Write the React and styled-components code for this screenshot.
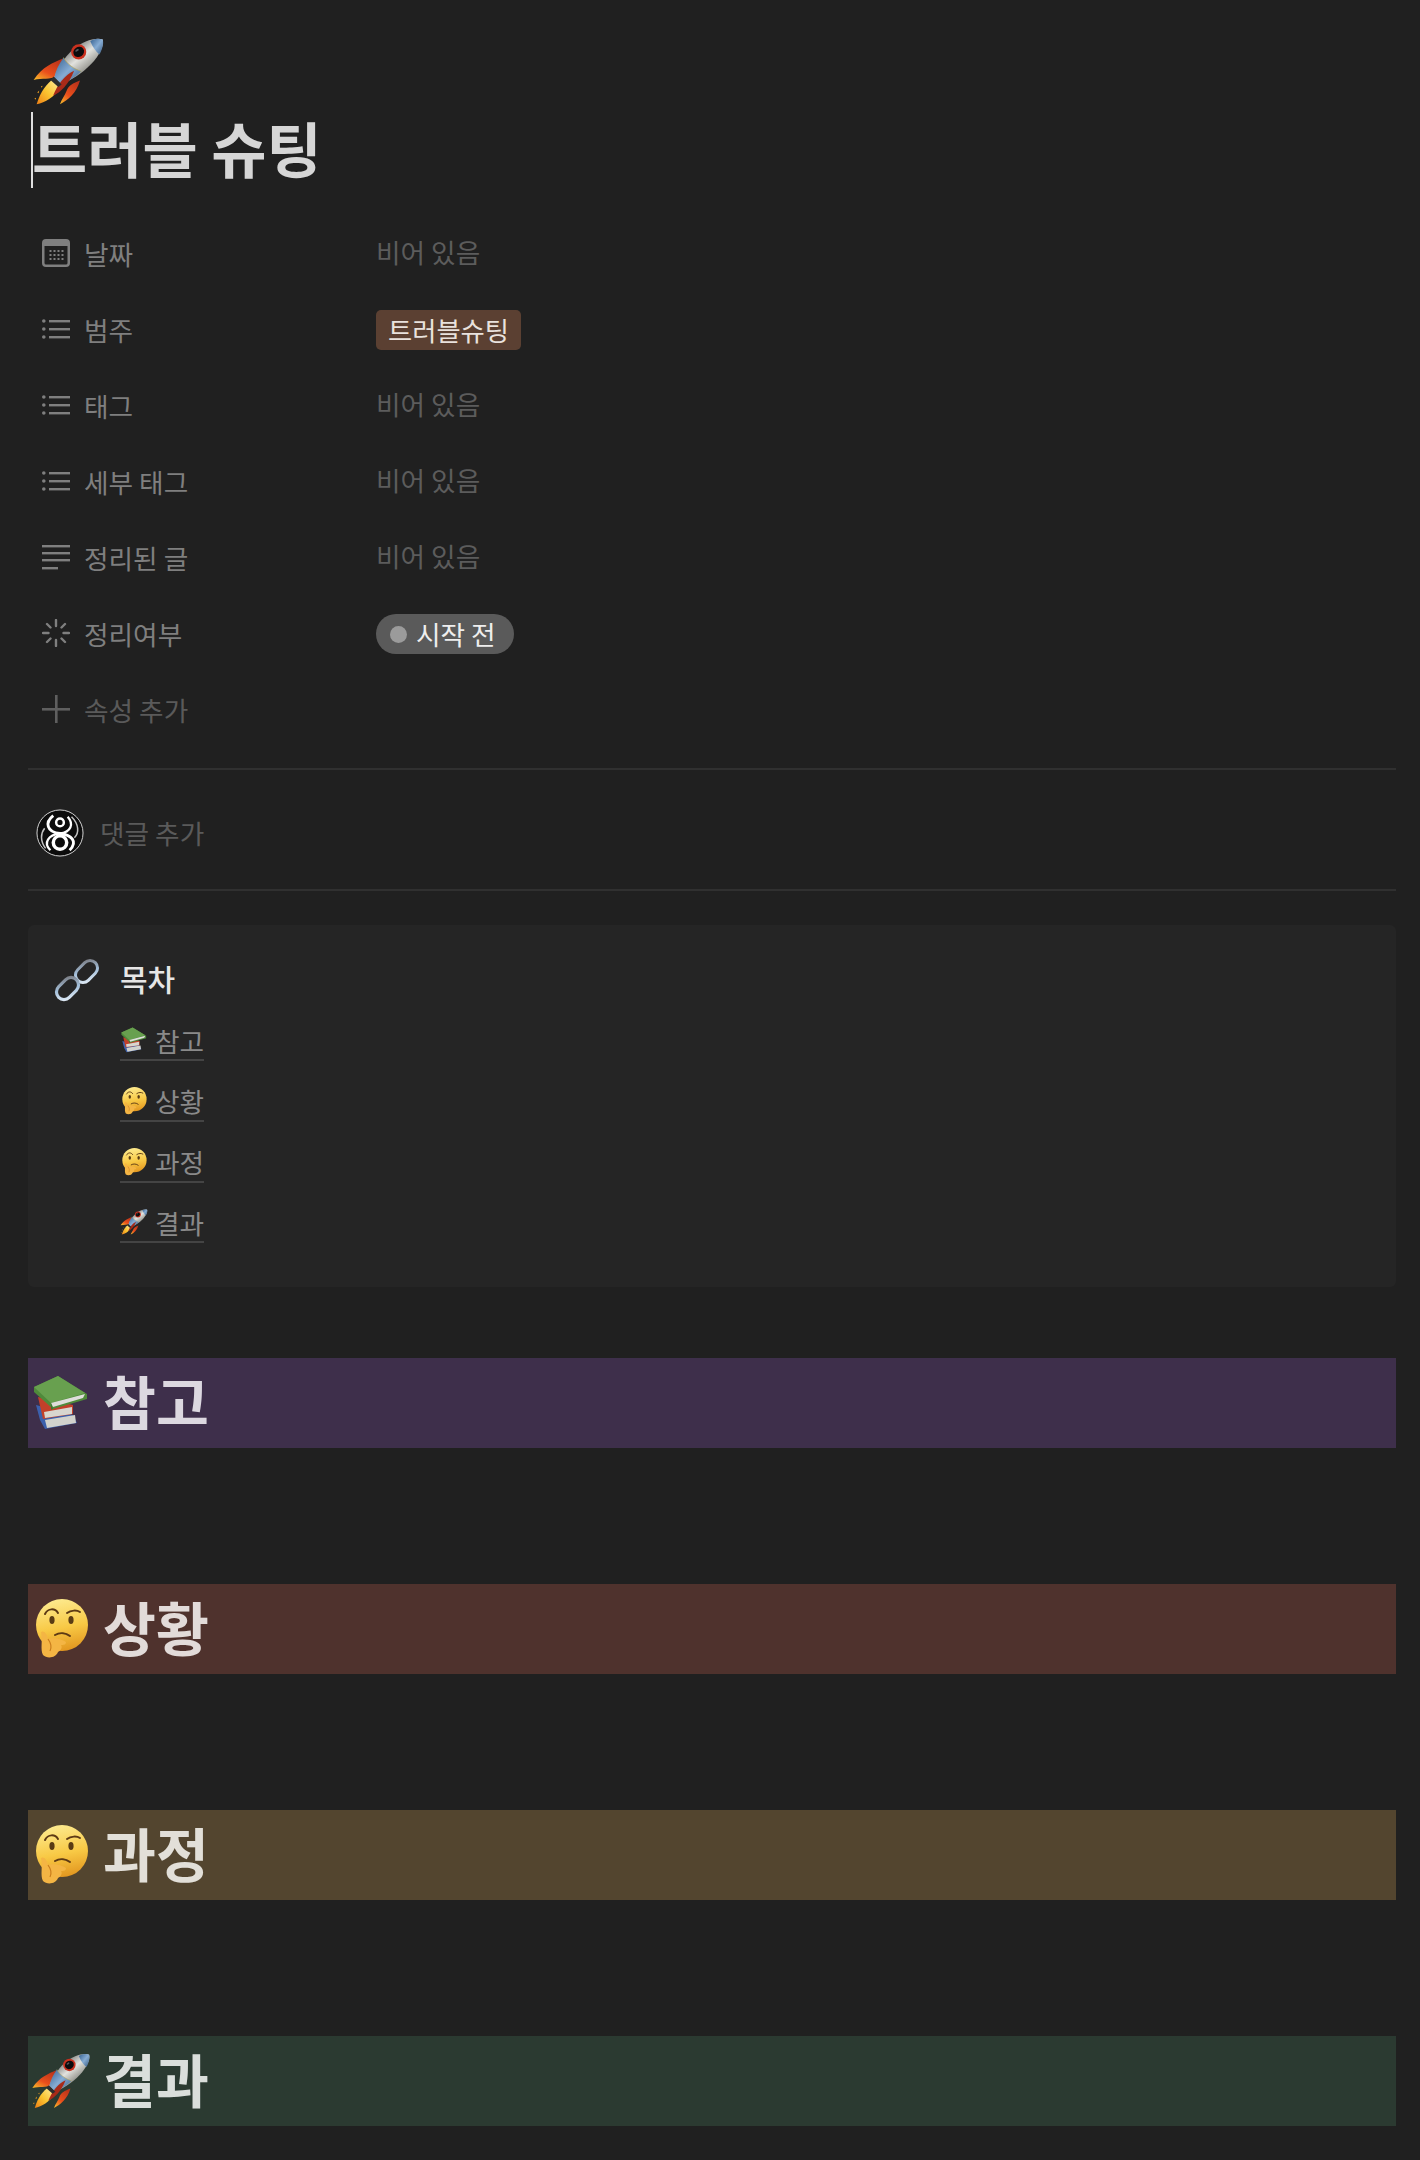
import styled, { createGlobalStyle } from 'styled-components';

const GlobalStyle = createGlobalStyle`
  html, body {
    margin: 0;
    padding: 0;
    background: #202020;
  }
  body {
    font-family: "Noto Sans CJK KR", "Noto Sans", sans-serif;
    color: #d4d4d4;
  }
`;

const Rocket = ({ size }) => (
  <svg width={size} height={size} viewBox="40 45 222 215">
    <defs>
      <linearGradient id="rkFin" x1="0.8" y1="0" x2="0.1" y2="1">
        <stop offset="0" stopColor="#b8321a" />
        <stop offset="0.6" stopColor="#ea4f1c" />
        <stop offset="1" stopColor="#f7b52a" />
      </linearGradient>
      <linearGradient id="rkFlame" x1="1" y1="0" x2="0" y2="1">
        <stop offset="0" stopColor="#fff3b0" />
        <stop offset="0.55" stopColor="#fbc531" />
        <stop offset="1" stopColor="#ee7f15" />
      </linearGradient>
      <linearGradient id="rkBody" x1="0.25" y1="0.15" x2="0.8" y2="0.8">
        <stop offset="0" stopColor="#5f605e" />
        <stop offset="0.45" stopColor="#e2e2de" />
        <stop offset="1" stopColor="#666760" />
      </linearGradient>
      <linearGradient id="rkBlue" x1="0" y1="0" x2="1" y2="1">
        <stop offset="0" stopColor="#35608f" />
        <stop offset="0.5" stopColor="#86acd4" />
        <stop offset="1" stopColor="#37597f" />
      </linearGradient>
    </defs>
    <path d="M134 113C105 125 72 138 45 178C72 172 95 178 114 168Z" fill="url(#rkFin)" />
    <path d="M186 180C165 188 150 196 145 212C140 226 130 238 125 252C150 240 175 218 186 180Z" fill="url(#rkFin)" />
    <path d="M108 172C84 190 66 212 54 252C80 246 108 232 128 198Z" fill="url(#rkFlame)" />
    <path d="M62 210l-6 6 4 3zM52 232l-5 3 5 3zM72 196l-5 2 3 4z" fill="#f0a020" />
    <path d="M255 55C232 48 195 60 165 85C136 112 116 148 108 170L130 192C152 182 192 160 220 130C246 102 260 72 255 55Z" fill="url(#rkBody)" />
    <path d="M255 55C238 50 226 54 217 60C224 78 234 92 245 101C253 85 259 68 255 55Z" fill="url(#rkBlue)" />
    <path d="M136 110C122 130 112 150 108 170L130 192C146 184 170 172 190 152C168 145 146 130 136 110Z" fill="url(#rkBlue)" />
    <path d="M136 110C146 130 168 145 190 152" fill="none" stroke="#b9a54d" strokeWidth="2" />
    <circle cx="182" cy="93" r="23" fill="#c9301e" />
    <ellipse cx="182" cy="93" rx="17" ry="15" transform="rotate(-35 182 93)" fill="#0b0b0d" />
    <ellipse cx="177" cy="88" rx="6" ry="3" transform="rotate(-35 177 88)" fill="#55565c" />
    <path d="M168 150C140 163 118 190 104 226C126 216 152 192 168 150Z" fill="#a82a18" />
    <path d="M106 168L130 192L120 200L96 178Z" fill="#2c2d2e" />
  </svg>
);

const Books = ({ size }) => (
  <svg width={size} height={size} viewBox="0 0 60 60">
    <path d="M5 32L42 42L46 50L14 56L9 47Z" fill="#3c60ac" />
    <path d="M14 47L44 42L45 50L16 55Z" fill="#d2d2cc" />
    <path d="M7 24L42 32L42 41L12 46Z" fill="#c2402a" />
    <path d="M13 39L41 34L41 41L14 45Z" fill="#d8d6cf" />
    <path d="M3 14L27 3L56 21L56 26L22 36L3 19Z" fill="#4f8a3a" />
    <path d="M3 14L27 3L54 20L20 30Z" fill="#68a04f" />
    <path d="M20 30L54 21L52 25L22 34Z" fill="#dededa" />
    <path d="M20 30L22 36L20 37Z" fill="#3f7530" />
  </svg>
);

const Thinking = ({ size }) => (
  <svg width={size} height={size} viewBox="0 0 60 60">
    <defs>
      <linearGradient id="thFace" x1="0.4" y1="0" x2="0.6" y2="1">
        <stop offset="0" stopColor="#fdea8e" />
        <stop offset="0.55" stopColor="#f8c945" />
        <stop offset="1" stopColor="#e2961f" />
      </linearGradient>
    </defs>
    <circle cx="31" cy="26" r="26" fill="url(#thFace)" />
    <path d="M14 15C17 9 24 9 27 14" fill="none" stroke="#5d3a14" strokeWidth="2" strokeLinecap="round" />
    <path d="M36 14C40 11 46 11 49 13" fill="none" stroke="#5d3a14" strokeWidth="2" strokeLinecap="round" />
    <ellipse cx="21" cy="21" rx="2.6" ry="4" fill="#5a3c14" />
    <ellipse cx="40" cy="21" rx="2.6" ry="4" fill="#5a3c14" />
    <path d="M24 36C29 33 35 34 39 37" fill="none" stroke="#5d3a14" strokeWidth="2" strokeLinecap="round" />
    <path d="M10 33C13 31 16 35 17 40C22 38 31 40 35 43C35 46 32 46 30 46C32 49 29 52 27 53C25 59 16 60 12 56C9 50 12 42 10 33Z" fill="#f4b544" />
    <path d="M17 40C20 44 21 48 19 52" fill="none" stroke="#c97d1c" strokeWidth="1.2" />
  </svg>
);

const ChainLink = () => (
  <svg width="46" height="46" viewBox="0 0 46 46">
    <defs>
      <linearGradient id="lkSteel" x1="0" y1="1" x2="1" y2="0">
        <stop offset="0" stopColor="#e6eff8" />
        <stop offset="0.5" stopColor="#a3bfda" />
        <stop offset="1" stopColor="#77777c" />
      </linearGradient>
    </defs>
    <rect x="20" y="7" width="25" height="15" rx="7.5" transform="rotate(-45 32.5 14.5)" fill="none" stroke="url(#lkSteel)" strokeWidth="3" />
    <rect x="1" y="24" width="25" height="15" rx="7.5" transform="rotate(-45 13.5 31.5)" fill="none" stroke="url(#lkSteel)" strokeWidth="3.2" />
  </svg>
);

const Swirl = () => (
  <svg width="48" height="48" viewBox="0 0 50 50">
    <circle cx="25" cy="25" r="24" fill="#0c0c0c" stroke="#d8d8d8" strokeWidth="1" />
    <circle cx="25" cy="14" r="4" fill="none" stroke="#fff" strokeWidth="2.6" />
    <circle cx="25" cy="35" r="7" fill="none" stroke="#fff" strokeWidth="3.6" />
    <path d="M18 7C9 14 11 24 25 25.5C37 27 44 34 35 43" fill="none" stroke="#fff" strokeWidth="3" />
    <path d="M33 8C40 16 36 24 25 25.5C13 27 7 35 15 43" fill="none" stroke="#fff" strokeWidth="2.4" />
    <path d="M37 8C45 16 45 25 40 30M10 41C4 33 5 25 9 20" fill="none" stroke="#c0c0c0" strokeWidth="1.6" />
  </svg>
);

const CalendarIcon = () => (
  <svg width="28" height="28" viewBox="0 0 28 28">
    <path fillRule="evenodd" d="M4 0H24A4 4 0 0 1 28 4V24A4 4 0 0 1 24 28H4A4 4 0 0 1 0 24V4A4 4 0 0 1 4 0ZM2.5 7V24A1.5 1.5 0 0 0 4 25.5H24A1.5 1.5 0 0 0 25.5 24V7Z" fill="#7f7f7f" />
    {[7, 11, 15, 19].map((x) =>
      [12, 16, 20].map((y) => <rect key={`${x}-${y}`} x={x + 0.5} y={y - 1} width="2" height="2" fill="#7f7f7f" />)
    )}
  </svg>
);

const ListIcon = () => (
  <svg width="28" height="28" viewBox="0 0 28 28" fill="#7f7f7f">
    <circle cx="1.8" cy="6" r="1.8" />
    <circle cx="1.8" cy="14" r="1.8" />
    <circle cx="1.8" cy="22" r="1.8" />
    <rect x="7" y="5" width="21" height="2.4" />
    <rect x="7" y="13" width="21" height="2.4" />
    <rect x="7" y="21" width="21" height="2.4" />
  </svg>
);

const TextIcon = () => (
  <svg width="28" height="28" viewBox="0 0 28 28" fill="#7f7f7f">
    <rect y="2" width="28" height="2.4" />
    <rect y="9" width="28" height="2.4" />
    <rect y="16" width="28" height="2.4" />
    <rect y="24" width="16" height="2.4" />
  </svg>
);

const StatusIcon = () => (
  <svg width="28" height="28" viewBox="0 0 28 28" stroke="#7f7f7f" strokeWidth="2.4" strokeLinecap="round">
    <path d="M14 1V7M14 21V27M1 14H6.5M21.5 14H27M5 5L8.5 8.5M23 5L19.5 8.5M5 23L8.5 19.5M23 23L19.5 19.5" />
  </svg>
);

const PlusIcon = () => (
  <svg width="28" height="28" viewBox="0 0 28 28" fill="#5f5f5f">
    <rect y="13" width="28" height="2.6" />
    <rect x="13" width="2.6" height="28" />
  </svg>
);

const Page = styled.div`
  width: 1420px;
  min-height: 2160px;
  box-sizing: border-box;
  padding: 35px 24px 0 28px;
  background: #202020;
`;

const PageIcon = styled.div`
  height: 71px;
  padding-left: 4px;
`;

const Title = styled.h1`
  position: relative;
  margin: 6px 0 0;
  height: 76px;
  padding-left: 4px;
  font-size: 60px;
  line-height: 70px;
  font-weight: 700;
  color: #d6d6d6;
  &::before {
    content: '';
    position: absolute;
    left: 3px;
    top: 0;
    width: 2px;
    height: 76px;
    background: #e0e0e0;
  }
`;

const Props = styled.div`
  margin-top: 27px;
  padding-left: 14px;
`;

const Row = styled.div`
  display: flex;
  align-items: center;
  height: 76px;
`;

const Label = styled.div`
  display: flex;
  align-items: center;
  gap: 14px;
  width: 334px;
  font-size: 26.7px;
  color: ${(p) => (p.$muted ? '#5a5a5a' : '#7f7f7f')};
`;

const Empty = styled.div`
  margin-bottom: 4px;
  font-size: 26.7px;
  color: #5c5c5c;
`;

const Tag = styled.div`
  display: flex;
  align-items: center;
  height: 40px;
  margin-top: 2px;
  padding: 0 12px 2px;
  box-sizing: border-box;
  border-radius: 5px;
  background: #5b4032;
  color: #e9e2dd;
  font-size: 26.3px;
`;

const Status = styled.div`
  display: flex;
  align-items: center;
  gap: 9px;
  height: 40px;
  margin-top: 2px;
  padding: 0 18px 2px 14px;
  box-sizing: border-box;
  border-radius: 20px;
  background: #5a5a5a;
  color: #eeeeee;
  font-size: 26.7px;
`;

const StatusDot = styled.span`
  width: 17px;
  height: 17px;
  margin-top: 2px;
  border-radius: 50%;
  background: #9b9b9b;
`;

const CommentBar = styled.div`
  display: flex;
  align-items: center;
  height: 119px;
  margin-top: 21px;
  padding-left: 8px;
  border-top: 2px solid #303030;
  border-bottom: 2px solid #303030;
  font-size: 26.7px;
  color: #5a5a5a;
`;

const CommentInner = styled.div`
  display: flex;
  align-items: center;
  gap: 16px;
  padding-top: 6px;
`;

const Callout = styled.div`
  display: flex;
  gap: 20px;
  margin-top: 34px;
  height: 362px;
  box-sizing: border-box;
  padding: 32px 26px;
  border-radius: 6px;
  background: #252525;
`;

const Toc = styled.div`
  display: flex;
  flex-direction: column;
  align-items: flex-start;
`;

const TocTitle = styled.div`
  flex: none;
  height: 46px;
  margin-bottom: 18px;
  font-size: 30px;
  line-height: 42px;
  font-weight: 500;
  color: #e6e6e6;
`;

const TocItem = styled.a`
  flex: none;
  display: flex;
  align-items: center;
  gap: 7px;
  height: 38px;
  margin-bottom: 20.8px;
  border-bottom: 2px solid #444444;
  font-size: 26.7px;
  color: #8a8a8a;
`;

const Section = styled.h2`
  display: flex;
  align-items: center;
  gap: 12px;
  height: 90px;
  margin: ${(p) => (p.$first ? '71px' : '136px')} 0 0;
  padding-left: 3px;
  background: ${(p) => p.$bg};
  color: ${(p) => p.$fg};
  font-size: 57.5px;
  font-weight: 700;
`;

const SectionName = styled.span`
  margin-bottom: 7px;
`;

const properties = [
  { icon: <CalendarIcon />, name: '날짜' },
  { icon: <ListIcon />, name: '범주', tag: '트러블슈팅' },
  { icon: <ListIcon />, name: '태그' },
  { icon: <ListIcon />, name: '세부 태그' },
  { icon: <TextIcon />, name: '정리된 글' },
  { icon: <StatusIcon />, name: '정리여부', status: '시작 전' },
];

const sections = [
  { name: '참고', Emoji: Books, bg: '#3e2f4b', fg: '#dcd8e0' },
  { name: '상황', Emoji: Thinking, bg: '#4f322d', fg: '#e2dbd9' },
  { name: '과정', Emoji: Thinking, bg: '#53452f', fg: '#e2dfd8' },
  { name: '결과', Emoji: Rocket, bg: '#2b3a31', fg: '#dadedb' },
];

const App = () => {
  return (
    <Page>
      <GlobalStyle />
      <PageIcon>
        <Rocket size={73} />
      </PageIcon>
      <Title>트러블 슈팅</Title>
      <Props>
        {properties.map((item) => (
          <Row key={item.name}>
            <Label>
              {item.icon}
              {item.name}
            </Label>
            {item.tag && <Tag>{item.tag}</Tag>}
            {item.status && (
              <Status>
                <StatusDot />
                {item.status}
              </Status>
            )}
            {!item.tag && !item.status && <Empty>비어 있음</Empty>}
          </Row>
        ))}
        <Row>
          <Label $muted>
            <PlusIcon />
            속성 추가
          </Label>
        </Row>
      </Props>
      <CommentBar>
        <CommentInner>
          <Swirl />
          댓글 추가
        </CommentInner>
      </CommentBar>
      <Callout>
        <ChainLink />
        <Toc>
          <TocTitle>목차</TocTitle>
          {sections.map(({ name, Emoji }) => (
            <TocItem key={name}>
              <Emoji size={28} />
              {name}
            </TocItem>
          ))}
        </Toc>
      </Callout>
      {sections.map(({ name, Emoji, bg, fg }, i) => (
        <Section key={name} $first={i === 0} $bg={bg} $fg={fg}>
          <Emoji size={60} />
          <SectionName>{name}</SectionName>
        </Section>
      ))}
    </Page>
  );
};

export default App;
